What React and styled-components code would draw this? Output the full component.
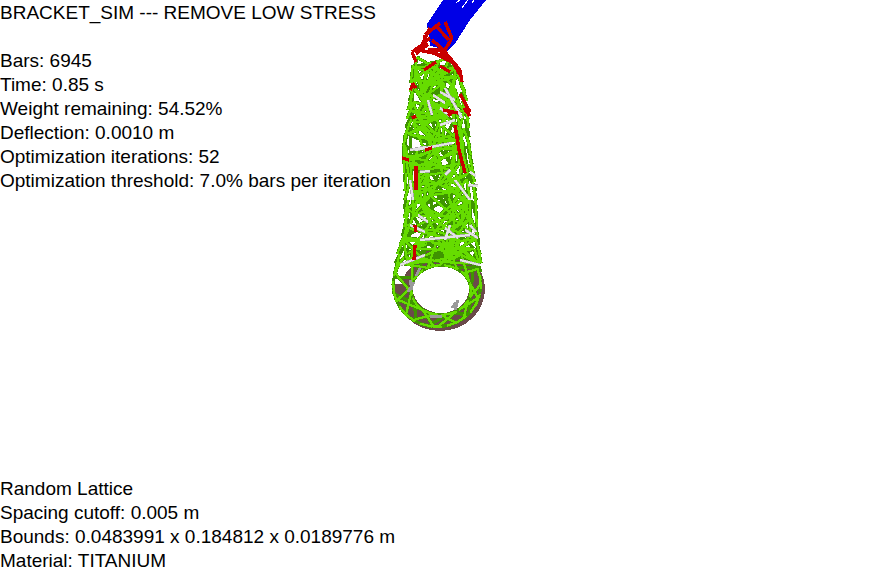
import React, { useMemo } from "react";
import styled, { createGlobalStyle } from "styled-components";

const GlobalStyle = createGlobalStyle`
  html, body {
    margin: 0;
    background: #fff;
  }
`;

const Page = styled.div`
  position: relative;
  width: 878px;
  height: 573px;
  overflow: hidden;
  display: flex;
  flex-direction: column;
  justify-content: space-between;
  padding-top: 1px;
  box-sizing: border-box;
  font-family: "Liberation Sans", Arial, sans-serif;
  font-size: 19px;
  line-height: 24px;
  color: #000;
`;

const TextBlock = styled.div`
  position: relative;
  display: flex;
  flex-direction: column;
  gap: ${({ $gap }) => $gap || 0}px;
`;

const Group = styled.div``;

const Line = styled.div`
  white-space: nowrap;
`;

const Canvas = styled.svg`
  position: absolute;
  left: 0;
  top: 0;
  shape-rendering: crispEdges;
`;

// seeded so the lattice comes out the same every load
function rng(seed) {
  let s = seed;
  return () => {
    s = (s * 1664525 + 1013904223) % 4294967296;
    return s / 4294967296;
  };
}

const leftEdge = [[56, 413], [80, 411], [110, 408], [150, 403], [190, 405], [230, 404], [262, 395]];
const rightEdge = [[56, 450], [70, 459], [100, 467], [150, 470], [190, 476], [230, 477], [262, 481]];

function edgeAt(edge, y) {
  for (let i = 1; i < edge.length; i++) {
    if (y <= edge[i][0]) {
      const [y0, x0] = edge[i - 1];
      const [y1, x1] = edge[i];
      return x0 + ((y - y0) / (y1 - y0)) * (x1 - x0);
    }
  }
  return edge[edge.length - 1][1];
}

function towerBars() {
  const r = rng(6945);
  const bars = [];
  // rails hugging the outline
  for (let y = 56; y < 262; y += 9) {
    const dl = r() * 6;
    const dr = r() * 6;
    bars.push([edgeAt(leftEdge, y) + dl, y, edgeAt(leftEdge, y + 18), y + 18]);
    bars.push([edgeAt(rightEdge, y) - dr, y, edgeAt(rightEdge, y + 18), y + 18]);
  }
  // one row of nodes every few pixels keeps the bars evenly spread
  const pts = [];
  const rows = 32;
  const perRow = 4;
  for (let row = 0; row < rows; row++) {
    for (let k = 0; k < perRow; k++) {
      const y = 56 + ((row + r()) * 210) / rows;
      const l = edgeAt(leftEdge, y) + 1;
      const w = edgeAt(rightEdge, y) - 1 - l;
      pts.push([l + ((k + r()) / perRow) * w, y]);
    }
  }
  pts.forEach((a, i) => {
    const near = pts
      .map((b, j) => ({ b, j, d: Math.hypot(a[0] - b[0], a[1] - b[1]) }))
      .filter((n) => n.j > i && n.d > 15 && n.d < 36)
      .sort(() => r() - 0.5)
      .slice(0, 3);
    near.forEach((n) => bars.push([a[0], a[1], n.b[0], n.b[1]]));
  });
  return bars;
}

// f = 0 sits on the rim of the hole, f = 1 on the outside of the ring
function ringPoint(t, f) {
  const cx = 441 - 4 * f;
  const cy = 290 - 5 * f;
  const rx = 30 + 14 * f;
  const ry = 25 + 17 * f;
  return [cx + Math.cos(t) * rx, cy + Math.sin(t) * ry];
}

function ringBars() {
  const r = rng(52);
  const bars = [];
  // outer and inner hoops, then struts between them
  for (let i = 0; i < 30; i++) {
    const t0 = (i / 30) * Math.PI * 2;
    const t1 = t0 + 0.3;
    bars.push([...ringPoint(t0, 1), ...ringPoint(t1, 1)]);
    bars.push([...ringPoint(t0, 0), ...ringPoint(t1, 0)]);
  }
  for (let i = 0; i < 30; i++) {
    const t0 = (i / 30) * Math.PI * 2 + r() * 0.2;
    const t1 = t0 + 0.3 + r() * 0.4;
    bars.push([...ringPoint(t0, i % 2), ...ringPoint(t1, (i + 1) % 2)]);
  }
  return bars;
}

const redBars = [
  [430, 28, 422, 45], [422, 45, 412, 52], [440, 23, 425, 35], [425, 35, 425, 48],
  [445, 22, 452, 38], [452, 38, 445, 50], [445, 50, 428, 50], [412, 52, 416, 62],
  [445, 52, 460, 70], [460, 70, 462, 82], [420, 50, 445, 56], [450, 58, 462, 78],
  [432, 40, 446, 52], [436, 26, 449, 40], [416, 50, 430, 38], [412, 83, 416, 88],
  [424, 52, 418, 46], [428, 44, 416, 54], [440, 50, 448, 58], [436, 54, 452, 62],
  [424, 70, 436, 62], [440, 66, 450, 72], [460, 94, 470, 112], [443, 110, 458, 113],
  [455, 125, 459, 150], [459, 150, 465, 173], [416, 166, 416, 190],
  [402, 158, 409, 160], [425, 150, 432, 148], [448, 116, 452, 112], [415, 225, 416, 232],
  [415, 245, 414, 260], [412, 118, 416, 116], [464, 108, 470, 116], [410, 90, 414, 84],
];

const whiteBars = [
  [433, 95, 445, 103], [428, 100, 432, 115], [445, 88, 462, 118], [440, 92, 455, 100],
  [415, 150, 452, 143], [420, 172, 430, 171], [410, 180, 413, 200], [455, 180, 470, 200],
  [468, 185, 478, 186], [445, 175, 450, 170], [440, 125, 455, 120], [420, 240, 470, 235],
  [400, 265, 425, 255], [410, 225, 425, 232], [445, 240, 450, 225], [465, 230, 478, 238],
  [460, 260, 480, 265], [470, 225, 476, 232], [410, 150, 426, 147], [418, 215, 428, 222],
  [445, 228, 458, 238], [440, 108, 450, 116], [470, 172, 476, 176],
];

const greyBars = [
  [410, 280, 412, 290], [414, 282, 408, 292], [420, 268, 416, 276],
  [455, 310, 458, 300], [452, 308, 456, 302], [430, 316, 442, 316],
];

const BLUE = "443,0 486,0 470,20 456,42 447,52 436,47 430,46 427,24";

function Bars({ bars, color, width }) {
  return (
    <g stroke={color} strokeWidth={width} fill="none">
      {bars.map((b, i) => (
        <line key={i} x1={b[0]} y1={b[1]} x2={b[2]} y2={b[3]} />
      ))}
    </g>
  );
}

function Lattice() {
  const tower = useMemo(towerBars, []);
  const ring = useMemo(ringBars, []);
  const all = useMemo(() => [...tower, ...ring], [tower, ring]);

  return (
    <Canvas width="878" height="573" viewBox="0 0 878 573">
      <ellipse cx="440" cy="289" rx="45" ry="42" fill="#6b4a4a" />
      <ellipse cx="441" cy="289" rx="28" ry="24" fill="#fff" />
      <path d="M393 262 H412 V266 A36 30 0 0 0 402 284 L393 284 Z" fill="#fff" />
      <polygon points={BLUE} fill="#0000e6" />
      <g stroke="#fff" strokeWidth="1">
        <line x1="456" y1="3" x2="460" y2="0" />
        <line x1="462" y1="8" x2="468" y2="0" />
        <line x1="472" y1="3" x2="474" y2="0" />
      </g>
      <Bars bars={all} color="#3f9400" width={3.2} />
      <Bars bars={all.filter((_, i) => i % 3 !== 0)} color="#66dc00" width={2.2} />
      <Bars bars={greyBars} color="#9a9a9a" width={3} />
      <Bars bars={whiteBars} color="#a8a8a8" width={3} />
      <Bars bars={whiteBars} color="#e4e4e4" width={2} />
      <Bars bars={redBars} color="#c80000" width={3.4} />
    </Canvas>
  );
}

const topStats = [
  "Bars: 6945",
  "Time: 0.85 s",
  "Weight remaining: 54.52%",
  "Deflection: 0.0010 m",
  "Optimization iterations: 52",
  "Optimization threshold: 7.0% bars per iteration",
];

const bottomStats = [
  "Random Lattice",
  "Spacing cutoff: 0.005 m",
  "Bounds: 0.0483991 x 0.184812 x 0.0189776 m",
  "Material: TITANIUM",
];

export default function App() {
  return (
    <Page>
      <GlobalStyle />
      <Lattice />
      <TextBlock $gap={24}>
        <Line>BRACKET_SIM --- REMOVE LOW STRESS</Line>
        <Group>
          {topStats.map((t) => (
            <Line key={t}>{t}</Line>
          ))}
        </Group>
      </TextBlock>
      <TextBlock>
        {bottomStats.map((t) => (
          <Line key={t}>{t}</Line>
        ))}
      </TextBlock>
    </Page>
  );
}
